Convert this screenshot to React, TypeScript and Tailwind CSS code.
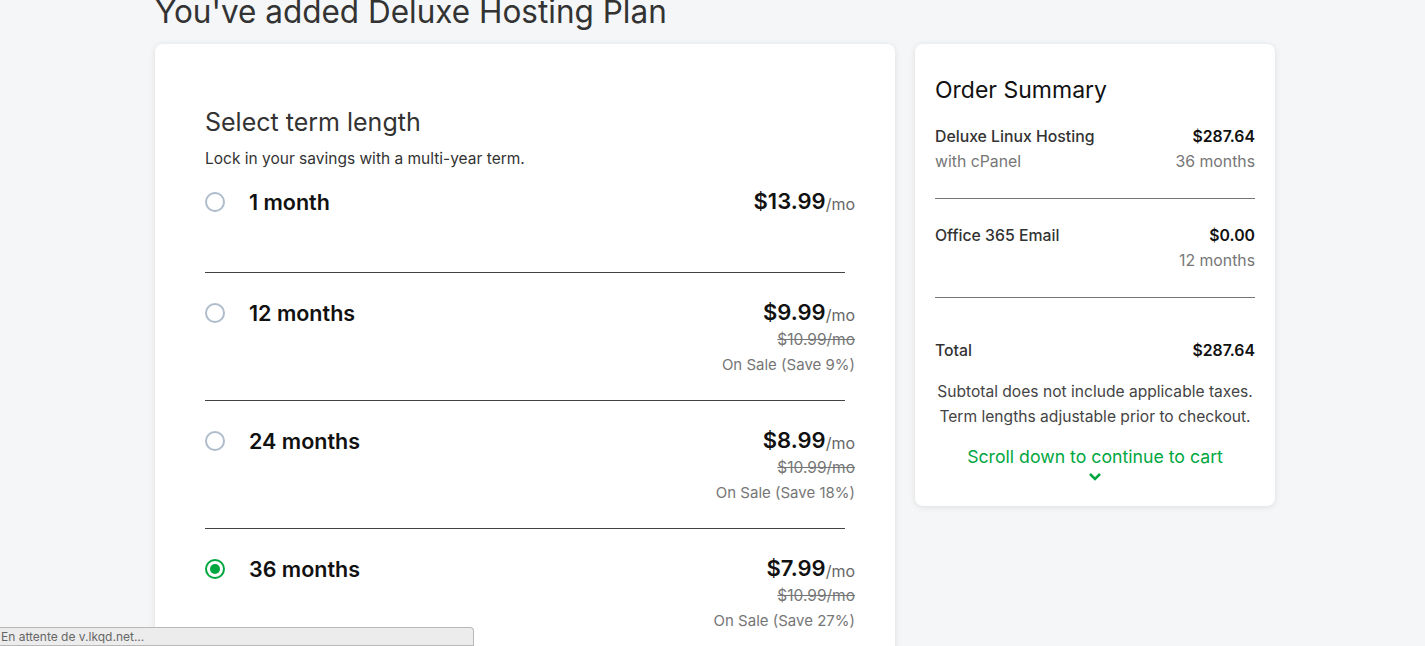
import React from "react";

const font = { fontFamily: "Inter, 'Noto Sans', sans-serif" };

type Opt = { label: string; price: string; old?: string; sale?: string; selected?: boolean };

const opts: Opt[] = [
  { label: "1 month", price: "$13.99" },
  { label: "12 months", price: "$9.99", old: "$10.99/mo", sale: "On Sale (Save 9%)" },
  { label: "24 months", price: "$8.99", old: "$10.99/mo", sale: "On Sale (Save 18%)" },
  { label: "36 months", price: "$7.99", old: "$10.99/mo", sale: "On Sale (Save 27%)", selected: true },
];

function Radio({ selected }: { selected?: boolean }) {
  if (selected)
    return (
      <div className="w-[20px] h-[20px] rounded-full border-2 border-[#00a63f] flex items-center justify-center">
        <div className="w-[10px] h-[10px] rounded-full bg-[#00a63f]" />
      </div>
    );
  return <div className="w-[20px] h-[20px] rounded-full border-2 border-[#aebccb]" />;
}

function Row({ o, first }: { o: Opt; first?: boolean }) {
  return (
    <div className={first ? "pt-[21px] h-[103px]" : "pt-[28px] h-[127px]"}>
      <div className="flex items-start justify-between">
        <div className="flex items-center h-[24px]">
          <div className="w-[20px] flex justify-center">
            <Radio selected={o.selected} />
          </div>
          <span className="ml-[24px] text-[21.5px] font-semibold text-[#111]">{o.label}</span>
        </div>
        <div className="flex flex-col items-end">
          <div className="h-[22px] flex items-end leading-none">
            <span className="text-[22px] font-semibold text-[#111]">{o.price}</span>
            <span className="text-[16px] text-[#666]">/mo</span>
          </div>
          {o.old && (
            <div className="mt-[4px] h-[25px] leading-[25px] text-[15.5px] text-[#767676] line-through">{o.old}</div>
          )}
          {o.sale && <div className="h-[25px] leading-[25px] text-[15px] text-[#767676]">{o.sale}</div>}
        </div>
      </div>
    </div>
  );
}

export default function App() {
  return (
    <div className="relative w-[1425px] h-[646px] overflow-hidden bg-[#f5f6f7]" style={font}>
      <div className="pl-[155px]">
        <h1 className="mt-[-8px] h-[52px] text-[31.5px] leading-[40px] text-[#333]">You've added Deluxe Hosting Plan</h1>
        <div className="flex gap-[20px] items-start">
          <div className="w-[740px] h-[700px] bg-white rounded-[8px] shadow-[0_1px_6px_rgba(0,0,0,0.10)] pl-[50px] pr-[40px] pt-[60px]">
            <div className="text-[25px] leading-[36px] text-[#333]">Select term length</div>
            <div className="mt-[9px] text-[15.5px] leading-[20px] text-[#333]">Lock in your savings with a multi-year term.</div>
            {opts.map((o, i) => (
              <div key={i}>
                <Row o={o} first={i === 0} />
                {i < opts.length - 1 && <div className="w-[640px] h-px bg-[#444]" />}
              </div>
            ))}
          </div>
          <div className="w-[360px] bg-white rounded-[8px] shadow-[0_1px_6px_rgba(0,0,0,0.10)] px-[20px] pt-[30px] pb-[24px]">
            <div className="text-[23px] leading-[32px] text-[#111]">Order Summary</div>
            <div className="mt-[18px] flex justify-between text-[15.8px] leading-[25px]">
              <div>
                <div className="font-medium text-[#333]">Deluxe Linux Hosting</div>
                <div className="text-[#767676]">with cPanel</div>
              </div>
              <div className="text-right">
                <div className="font-semibold text-[#111]">$287.64</div>
                <div className="text-[#767676]">36 months</div>
              </div>
            </div>
            <div className="mt-[24px] h-px bg-[#767676]" />
            <div className="mt-[24px] flex justify-between text-[15.8px] leading-[25px]">
              <div className="font-medium text-[#333]">Office 365 Email</div>
              <div className="text-right">
                <div className="font-semibold text-[#111]">$0.00</div>
                <div className="text-[#767676]">12 months</div>
              </div>
            </div>
            <div className="mt-[24px] h-px bg-[#767676]" />
            <div className="mt-[40px] flex justify-between text-[15.8px] leading-[25px]">
              <div className="font-medium text-[#333]">Total</div>
              <div className="font-semibold text-[#111]">$287.64</div>
            </div>
            <div className="mt-[16px] text-center text-[15.6px] leading-[25px] text-[#444]">
              <div>Subtotal does not include applicable taxes.</div>
              <div>Term lengths adjustable prior to checkout.</div>
            </div>
            <div className="mt-[17px] text-center text-[17.7px] leading-[22px] text-[#00a63f]">Scroll down to continue to cart</div>
            <div className="mt-[4px] flex justify-center">
              <svg width="14" height="10" viewBox="0 0 14 10" fill="none">
                <path d="M2 2l5 5 5-5" stroke="#00a63f" strokeWidth="2.5" />
              </svg>
            </div>
          </div>
        </div>
      </div>
      <div className="absolute left-0 bottom-0 w-[474px] h-[19px] bg-[#ececec] border border-[#b8b8b8] border-l-0 rounded-tr-[4px] text-[12px] leading-[17px] text-[#666] pl-[1px]">
        En attente de v.lkqd.net...
      </div>
    </div>
  );
}
